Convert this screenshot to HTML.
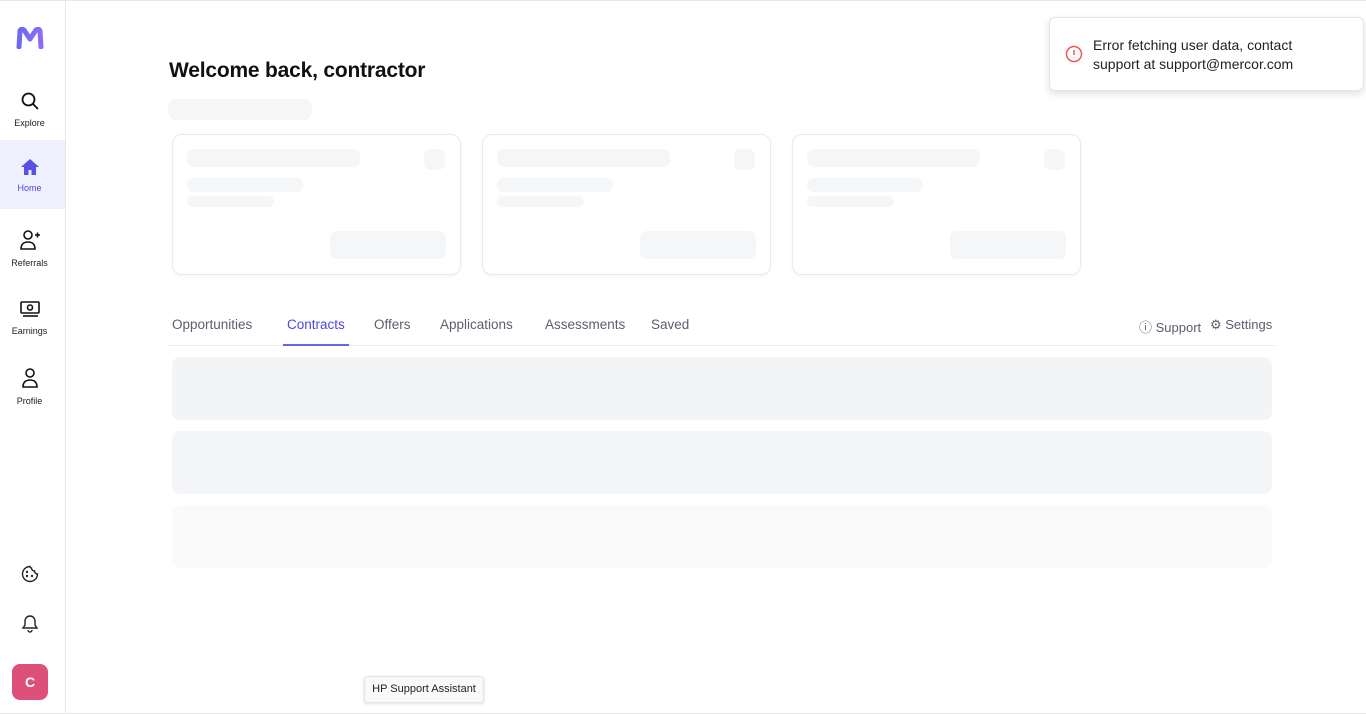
<!DOCTYPE html>
<html><head><meta charset="utf-8"><style>
*{box-sizing:border-box;margin:0;padding:0}
body{width:1366px;height:714px;background:#fff;font-family:"Liberation Sans",sans-serif;position:relative;overflow:hidden;border-top:1px solid #e5e7eb}
.sb{position:absolute;left:0;top:0;width:66px;height:713px;border-right:1px solid #e8e8ec}
.ni{position:absolute;left:0;width:65px;height:69px;text-align:center;font-size:9px;color:#222;padding-top:2px}
.ni svg{display:block;margin:0 auto 7px}
.abs{position:absolute}
.sk{position:absolute;background:#f5f6f8;border-radius:7px}
.card{position:absolute;top:133px;width:289px;height:141px;border:1px solid #e9eaee;border-radius:10px;box-shadow:0 1px 3px rgba(0,0,0,.05)}
.tab{position:absolute;top:316px;font-size:13.5px;color:#5a5f6b}
.row{position:absolute;left:172px;width:1100px;height:63px;border-radius:8px}
</style></head><body>
<div class="sb">
<svg class="abs" style="left:16px;top:26px" width="28" height="22" viewBox="0 0 28 22"><defs><linearGradient id="g" x1="0" x2="1"><stop offset="0" stop-color="#6d6af0"/><stop offset="1" stop-color="#8c6cf5"/></linearGradient></defs><path d="M3 20 L4 4 Q5 1 8 3 L14 12 L20 3 Q23 1 24 4 L25 20" fill="none" stroke="url(#g)" stroke-width="5" stroke-linecap="round" stroke-linejoin="round"/></svg>
<div class="ni" style="top:88px;left:-3px"><svg width="20" height="20" viewBox="0 0 20 20" fill="none" stroke="#111" stroke-width="1.8"><circle cx="8.5" cy="8.5" r="6"/><path d="M13 13l5 5"/></svg>Explore</div>
<div class="ni" style="top:139px;background:#eef0fd;color:#4f46e5;padding-top:17px;left:0"><svg width="20" height="20" viewBox="0 0 20 20" style="margin-bottom:6px;margin-left:20px"><path d="M10 2L1 10h3v8h4.5v-5h3v5H16v-8h3z" fill="#5b4fe6"/></svg><span style="margin-left:-6px">Home</span></div>
<div class="ni" style="top:226px;left:-3px"><svg width="20" height="22" viewBox="0 0 20 22" fill="none" stroke="#111" stroke-width="1.6"><circle cx="8" cy="6" r="4"/><path d="M1 20c0-5 3-7 7-7s7 2 7 7z M15 6h5 M17.5 3.5v5"/></svg>Referrals</div>
<div class="ni" style="top:296px;left:-3px"><svg width="20" height="20" viewBox="0 0 20 20" fill="none" stroke="#111" stroke-width="1.6"><rect x="1" y="3" width="18" height="11" rx="1"/><circle cx="10" cy="8.5" r="2.5"/><path d="M3 17h15"/></svg>Earnings</div>
<div class="ni" style="top:364px;left:-3px"><svg width="20" height="22" viewBox="0 0 20 22" fill="none" stroke="#111" stroke-width="1.6"><circle cx="10" cy="6" r="4"/><path d="M3 20c0-5 3-7 7-7s7 2 7 7z"/></svg>Profile</div>
<svg class="abs" style="left:21px;top:564px" width="18" height="18" viewBox="0 0 18 18" fill="none" stroke="#222" stroke-width="1.4"><path d="M9 1.5a7.5 7.5 0 1 0 7.5 7.5 3 3 0 0 1-3-3 3 3 0 0 1-3-3 1.5 1.5 0 0 1-1.5-1.5z"/><circle cx="6" cy="7" r=".5"/><circle cx="11" cy="11" r=".5"/><circle cx="6" cy="11" r=".5"/></svg>
<svg class="abs" style="left:21px;top:613px" width="18" height="20" viewBox="0 0 18 20" fill="none" stroke="#222" stroke-width="1.4"><path d="M9 2a5 5 0 0 0-5 5v4l-2 3h14l-2-3V7a5 5 0 0 0-5-5zM7 16a2 2 0 0 0 4 0"/></svg>
<div class="abs" style="left:12px;top:663px;width:36px;height:36px;border-radius:8px;background:#dc5079;color:#fff;font-weight:bold;font-size:14px;text-align:center;line-height:36px">C</div>
</div>
<div class="abs" style="left:169px;top:58px;font-size:21px;color:#111;font-weight:bold;letter-spacing:-0.2px">Welcome back, contractor</div>
<div class="sk" style="left:168px;top:98px;width:144px;height:21px;border-radius:8px"></div>
<div class="card" style="left:172px"><div class="sk" style="left:14px;top:14px;width:173px;height:18px"></div><div class="sk" style="left:251px;top:14px;width:21px;height:21px"></div><div class="sk" style="left:14px;top:43px;width:116px;height:14px"></div><div class="sk" style="left:14px;top:61px;width:87px;height:11px"></div><div class="sk" style="left:157px;top:96px;width:116px;height:28px"></div></div>
<div class="card" style="left:482px"><div class="sk" style="left:14px;top:14px;width:173px;height:18px"></div><div class="sk" style="left:251px;top:14px;width:21px;height:21px"></div><div class="sk" style="left:14px;top:43px;width:116px;height:14px"></div><div class="sk" style="left:14px;top:61px;width:87px;height:11px"></div><div class="sk" style="left:157px;top:96px;width:116px;height:28px"></div></div>
<div class="card" style="left:792px"><div class="sk" style="left:14px;top:14px;width:173px;height:18px"></div><div class="sk" style="left:251px;top:14px;width:21px;height:21px"></div><div class="sk" style="left:14px;top:43px;width:116px;height:14px"></div><div class="sk" style="left:14px;top:61px;width:87px;height:11px"></div><div class="sk" style="left:157px;top:96px;width:116px;height:28px"></div></div>
<div class="tab" style="left:172px">Opportunities</div>
<div class="tab" style="left:287px;color:#4f46e5">Contracts</div>
<div class="tab" style="left:374px">Offers</div>
<div class="tab" style="left:440px">Applications</div>
<div class="tab" style="left:545px">Assessments</div>
<div class="tab" style="left:651px">Saved</div>
<div class="abs" style="left:168px;top:344px;width:1108px;height:1px;background:#eeeff2"></div>
<div class="abs" style="left:283px;top:343px;width:66px;height:2px;background:#6366f1"></div>
<div class="tab" style="left:1139px;font-size:13px">&#9432; Support</div>
<div class="tab" style="left:1210px;font-size:13px">&#9881; Settings</div>
<div class="row" style="top:356px;background:#f3f4f6"></div>
<div class="row" style="top:430px;background:#f4f5f7"></div>
<div class="row" style="top:504px;background:#fafafb"></div>
<div class="abs" style="left:1049px;top:16px;width:315px;height:74px;background:#fff;border:1px solid #e5e5e5;border-radius:6px;box-shadow:0 3px 8px rgba(0,0,0,.12)">
<svg class="abs" style="left:15px;top:27px" width="18" height="18" viewBox="0 0 18 18" fill="none" stroke="#e55" stroke-width="1.5"><circle cx="9" cy="9" r="7.5"/><path d="M9 5v5M9 12.5v.5"/></svg>
<div class="abs" style="left:43px;top:18px;font-size:14px;line-height:19px;color:#222">Error fetching user data, contact<br>support at support@mercor.com</div></div>
<div class="abs" style="left:364px;top:675px;width:120px;height:27px;background:#f9f9f9;border:1px solid #e4e4e4;border-radius:3px;box-shadow:0 1px 3px rgba(0,0,0,.12);font-size:11px;line-height:25px;text-align:center;color:#222">HP Support Assistant</div>
<div class="abs" style="left:0;top:712px;width:1366px;height:1px;background:#e5e7eb"></div>
</body></html>
